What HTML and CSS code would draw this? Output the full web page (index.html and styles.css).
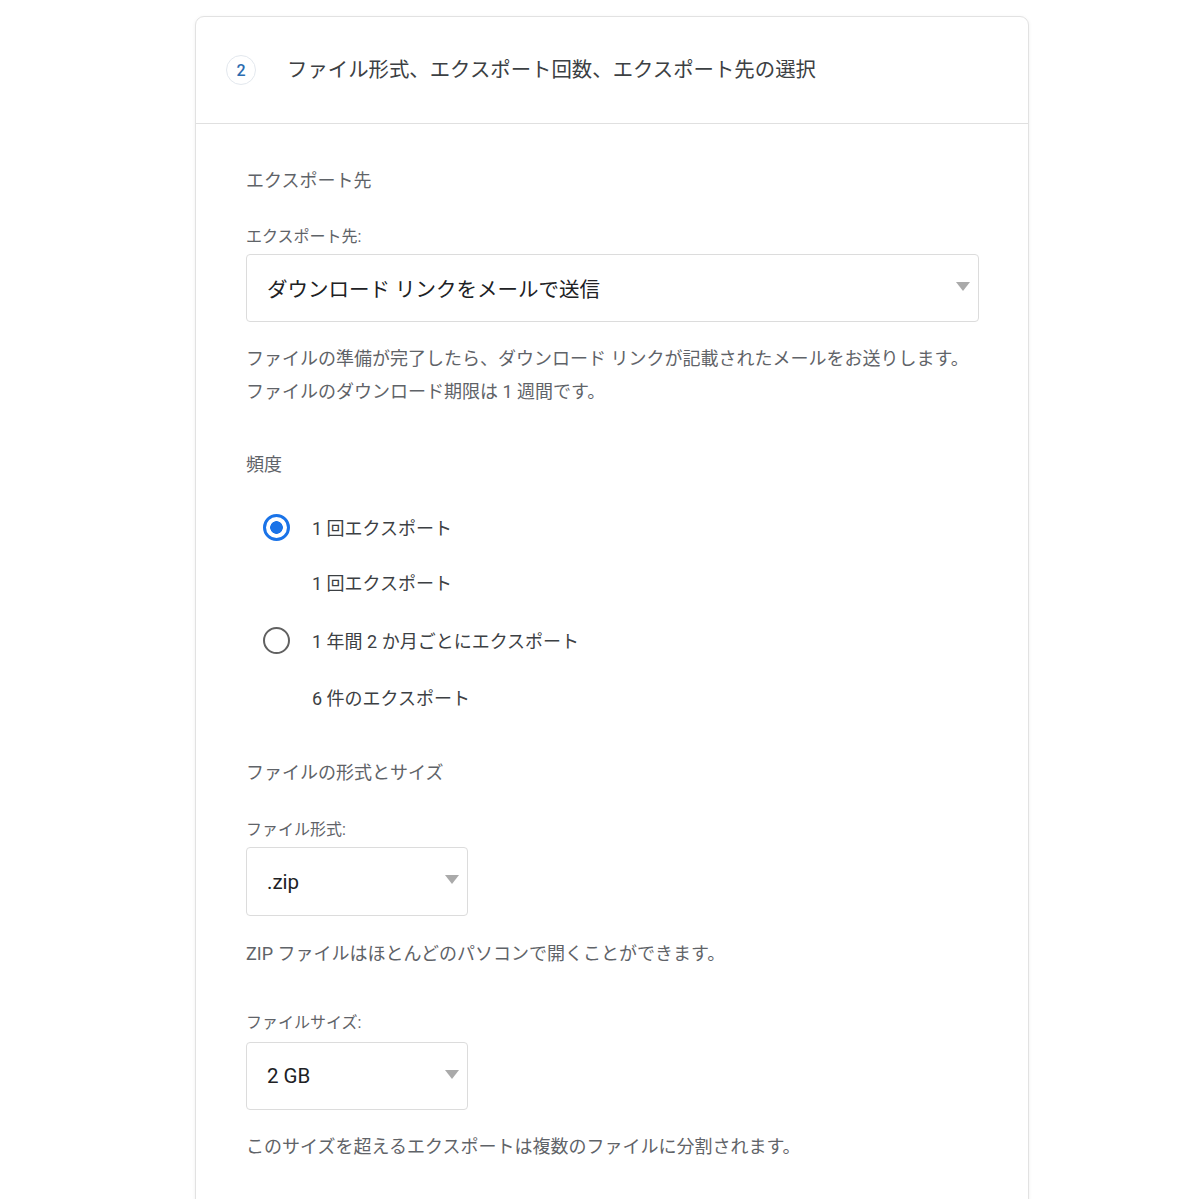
FILE: index.html
```html
<!DOCTYPE html>
<html lang="ja">
<head>
<meta charset="utf-8">
<title>エクスポート</title>
<link rel="stylesheet" href="styles.css">
</head>
<body>
<div class="card">
  <div class="card-header">
    <div class="step">2</div>
    <h2 class="title">ファイル形式、エクスポート回数、エクスポート先の選択</h2>
  </div>
  <div class="card-body">
    <div class="heading h-first">エクスポート先</div>
    <div class="label l-dest">エクスポート先:</div>
    <div class="select select-wide">
      <span class="select-text">ダウンロード リンクをメールで送信</span>
      <span class="arrow"></span>
    </div>
    <p class="desc desc-dest">ファイルの準備が完了したら、ダウンロード リンクが記載されたメールをお送りします。<br>ファイルのダウンロード期限は 1 週間です。</p>

    <div class="heading h-freq">頻度</div>
    <div class="radios">
      <div class="radio-row">
        <span class="radio checked"></span>
        <span class="radio-label">1 回エクスポート</span>
      </div>
      <div class="radio-sub">1 回エクスポート</div>
      <div class="radio-row">
        <span class="radio"></span>
        <span class="radio-label">1 年間 2 か月ごとにエクスポート</span>
      </div>
      <div class="radio-sub sub-last">6 件のエクスポート</div>
    </div>

    <div class="heading h-format">ファイルの形式とサイズ</div>
    <div class="label l-format">ファイル形式:</div>
    <div class="select select-small">
      <span class="select-text">.zip</span>
      <span class="arrow"></span>
    </div>
    <p class="desc desc-zip">ZIP ファイルはほとんどのパソコンで開くことができます。</p>
    <div class="label l-size">ファイルサイズ:</div>
    <div class="select select-small select-size">
      <span class="select-text">2 GB</span>
      <span class="arrow"></span>
    </div>
    <p class="desc desc-size">このサイズを超えるエクスポートは複数のファイルに分割されます。</p>
  </div>
</div>
</body>
</html>
```

FILE: styles.css
```css
* { box-sizing: border-box; }

html, body {
  margin: 0;
  padding: 0;
  background: #ffffff;
}

body {
  font-family: Roboto, "Noto Sans CJK JP", "Noto Sans", sans-serif;
  color: #5f6368;
}

.card {
  margin: 16px 0 0 195px;
  width: 834px;
  min-height: 1200px;
  border: 1px solid #e2e2e2;
  border-radius: 9px;
  box-shadow: 0 1px 4px rgba(0, 0, 0, 0.06);
  background: #fff;
}

.card-header {
  height: 107px;
  display: flex;
  align-items: center;
  padding-left: 30px;
  border-bottom: 1px solid #e0e0e0;
}

.step {
  width: 30px;
  height: 30px;
  border-radius: 50%;
  border: 1px solid #e3e8ee;
  color: #2b6cb0;
  font-size: 16px;
  font-weight: 500;
  display: flex;
  align-items: center;
  justify-content: center;
  flex: none;
}

.title {
  margin: 0 0 0 31px;
  font-weight: 400;
  font-size: 20.4px;
  line-height: 30px;
  color: #3c4043;
}

.card-body {
  padding: 44px 50px 0 50px;
}

.heading {
  font-size: 18px;
  line-height: 26px;
  color: #5f6368;
}

.label {
  font-size: 16px;
  line-height: 24px;
  color: #5f6368;
}

.l-dest { margin-top: 31px; }
.h-freq { margin-top: 44px; }
.h-format { margin-top: 33px; }
.l-format { margin-top: 32px; }
.l-size { margin-top: 44px; }

.select {
  display: flex;
  align-items: center;
  justify-content: space-between;
  border: 1px solid #dcdcdc;
  border-radius: 4px;
  height: 69px;
  padding: 0 8px 0 20px;
  margin-top: 5px;
  background: #fff;
}

.select-wide { width: 733px; height: 68px; }
.select-small { width: 222px; margin-top: 5px; }
.select-size { margin-top: 7px; height: 68px; }

.select-text {
  font-size: 20.5px;
  color: #202124;
}

.arrow {
  width: 0;
  height: 0;
  border-left: 7.5px solid transparent;
  border-right: 7.5px solid transparent;
  border-top: 9px solid #aaaaaa;
  margin-top: -4px;
}

.desc {
  margin: 0;
  font-size: 18px;
  color: #5f6368;
}

.desc-dest {
  line-height: 33px;
  margin-top: 20px;
}

.desc-zip {
  line-height: 26px;
  margin-top: 25px;
}

.desc-size {
  line-height: 26px;
  margin-top: 24px;
}

.radios {
  margin-top: 21px;
}

.radio-row {
  display: flex;
  align-items: center;
  height: 56px;
  padding-left: 17px;
}

.radio {
  width: 27px;
  height: 27px;
  border-radius: 50%;
  border: 2px solid #616161;
  flex: none;
  margin-right: 22px;
  background: #fff;
}

.radio.checked {
  border: 3.5px solid #1a73e8;
  background: radial-gradient(circle, #1a73e8 0 6px, #ffffff 6.6px);
}

.radio-label,
.radio-sub {
  font-size: 18px;
  color: #3c4043;
}

.radio-sub {
  height: 57px;
  line-height: 57px;
  padding-left: 66px;
}

.sub-last {
  line-height: 61px;
  height: 59px;
}
```
